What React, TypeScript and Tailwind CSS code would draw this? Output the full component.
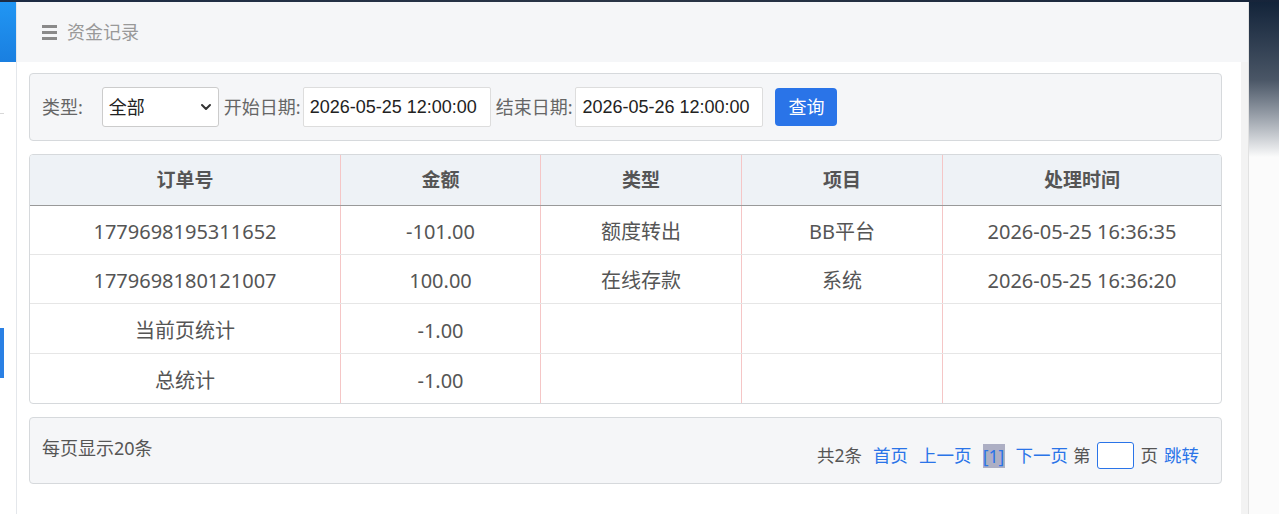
import { ChevronDown } from "lucide-react";

const ROWS = [
  { no: "1779698195311652", amount: "-101.00", type: "额度转出", item: "BB平台", time: "2026-05-25 16:36:35" },
  { no: "1779698180121007", amount: "100.00", type: "在线存款", item: "系统", time: "2026-05-25 16:36:20" },
  { no: "当前页统计", amount: "-1.00", type: "", item: "", time: "" },
  { no: "总统计", amount: "-1.00", type: "", item: "", time: "" },
];

const COLS = ["w-[311px]", "w-[200px]", "w-[201px]", "w-[201px]", "flex-1"];
const HEADS = ["订单号", "金额", "类型", "项目", "处理时间"];
const ROW_H = ["h-[49px]", "h-[49px]", "h-[50px]", "h-[49px]"];

const font = { fontFamily: '"Noto Sans", "Noto Sans CJK SC", sans-serif' };
const arial = { fontFamily: '"Liberation Sans", Arial, "Noto Sans CJK SC", sans-serif' };

const App = () => {
  return (
    <div className="w-[1279px] h-[514px] overflow-hidden bg-white flex flex-col" style={font}>
      {/* top dark strip */}
      <div className="h-[2px] bg-gradient-to-r from-[#1c2b44] via-[#2a3546] to-[#16243a]" />

      <div className="flex flex-1">
        {/* Sidebar edge */}
        <div className="w-[17px] border-r border-[#e4e7eb] flex flex-col">
          <div className="h-[60px] bg-gradient-to-b from-[#2196f3] to-[#1a7fe0]" />
          <div className="mt-[51px] h-px w-[4px] bg-[#d8d8d8]" />
          <div className="mt-[214px] h-[50px] w-[4px] bg-[#2a80e4]" />
        </div>

        {/* Main */}
        <div className="w-[1231px] flex flex-col">
          {/* Header */}
          <div className="h-[60px] bg-[#f5f6f8] flex items-center pl-[25px] gap-[10px] text-[#999] text-[18px]">
            <span className="flex flex-col gap-[3px]">
              <span className="block w-[15px] h-[3px] bg-[#8a8a8a]" />
              <span className="block w-[15px] h-[3px] bg-[#8a8a8a]" />
              <span className="block w-[15px] h-[3px] bg-[#8a8a8a]" />
            </span>
            <span>资金记录</span>
          </div>

          <div className="flex flex-1">
            <div className="w-[1224px] bg-white pl-[12px] pt-[11px]">
              {/* Filter */}
              <div className="w-[1193px] h-[68px] bg-[#f5f6f8] border border-[#d6d9dc] rounded-[4px] flex items-center pl-[12px] text-[18px] text-[#666]">
                <span className="mr-[19px]">类型:</span>
                <div className="w-[117px] h-[40px] bg-white border border-[#ccc] rounded-[3px] flex items-center justify-between pl-[6px] pr-[4px] text-[18px] text-[#222]">
                  <span>全部</span>
                  <ChevronDown size={16} strokeWidth={3} className="text-[#333]" />
                </div>
                <span className="ml-[5px] mr-[2px]">开始日期:</span>
                <div className="w-[188px] h-[40px] bg-white border border-[#ddd] rounded-[2px] flex items-center pl-[6px] text-[18px] text-[#222]" style={arial}>
                  2026-05-25 12:00:00
                </div>
                <span className="ml-[5px] mr-[3px]">结束日期:</span>
                <div className="w-[188px] h-[40px] bg-white border border-[#ddd] rounded-[2px] flex items-center pl-[6px] text-[18px] text-[#222]" style={arial}>
                  2026-05-26 12:00:00
                </div>
                <button className="ml-[12px] w-[62px] h-[38px] bg-[#2a74e8] rounded-[4px] text-white text-[18px]">查询</button>
              </div>

              {/* Table */}
              <div className="mt-[13px] w-[1193px] border border-[#d6d9dc] rounded-[4px] overflow-hidden text-[20px] text-[#555]">
                <div className="flex h-[51px] bg-[#eef2f6] border-b border-[#999]">
                  {HEADS.map((h, i) => (
                    <div key={h} className={`${COLS[i]} flex items-center justify-center pt-[1px] font-bold text-[19px] ${i < 4 ? "border-r border-[#f5c6c6]" : ""}`}>
                      {h}
                    </div>
                  ))}
                </div>
                {ROWS.map((r, ri) => {
                  const cells = [r.no, r.amount, r.type, r.item, r.time];
                  return (
                    <div key={ri} className={`flex ${ROW_H[ri]} ${ri < ROWS.length - 1 ? "border-b border-[#e6e6e6]" : ""}`}>
                      {cells.map((c, i) => (
                        <div key={i} className={`${COLS[i]} flex items-center justify-center pt-[4px] ${i < 4 ? "border-r border-[#f5c6c6]" : ""}`}>
                          {c}
                        </div>
                      ))}
                    </div>
                  );
                })}
              </div>

              {/* Pager */}
              <div className="mt-[13px] w-[1193px] h-[67px] bg-[#f5f6f8] border border-[#d6d9dc] rounded-[4px] flex justify-between pl-[12px] pr-[22px] text-[18px] text-[#555]">
                <div className="pt-[17px]">每页显示20条</div>
                <div className="flex items-center pt-[10px] text-[17.5px]">
                  <span>共2条</span>
                  <span className="ml-[11px] text-[#2a74e8]">首页</span>
                  <span className="ml-[11px] text-[#2a74e8]">上一页</span>
                  <span className="ml-[11px] bg-[#adafc4] text-[#2a74e8] w-[22px] text-center leading-[24px]">[1]</span>
                  <span className="ml-[11px] text-[#2a74e8]">下一页</span>
                  <span className="ml-[5px]">第</span>
                  <span className="ml-[6px] block w-[37px] h-[27px] bg-white border border-[#2a74e8] rounded-[3px]" />
                  <span className="ml-[7px]">页</span>
                  <span className="ml-[6px] text-[#2a74e8]">跳转</span>
                </div>
              </div>
            </div>
            <div className="w-[7px] bg-[#f3f3f3]" />
          </div>
        </div>

        {/* Right background */}
        <div className="w-px bg-[#e2e2e2]" />
        <div className="flex-1 flex flex-col">
          <div className="h-[155px] bg-gradient-to-b from-[#13243a] via-[#4a5666] to-[#fbfbfb]" />
          <div className="flex-1 bg-[#fbfbfb]" />
        </div>
      </div>
    </div>
  );
};

export default App;
